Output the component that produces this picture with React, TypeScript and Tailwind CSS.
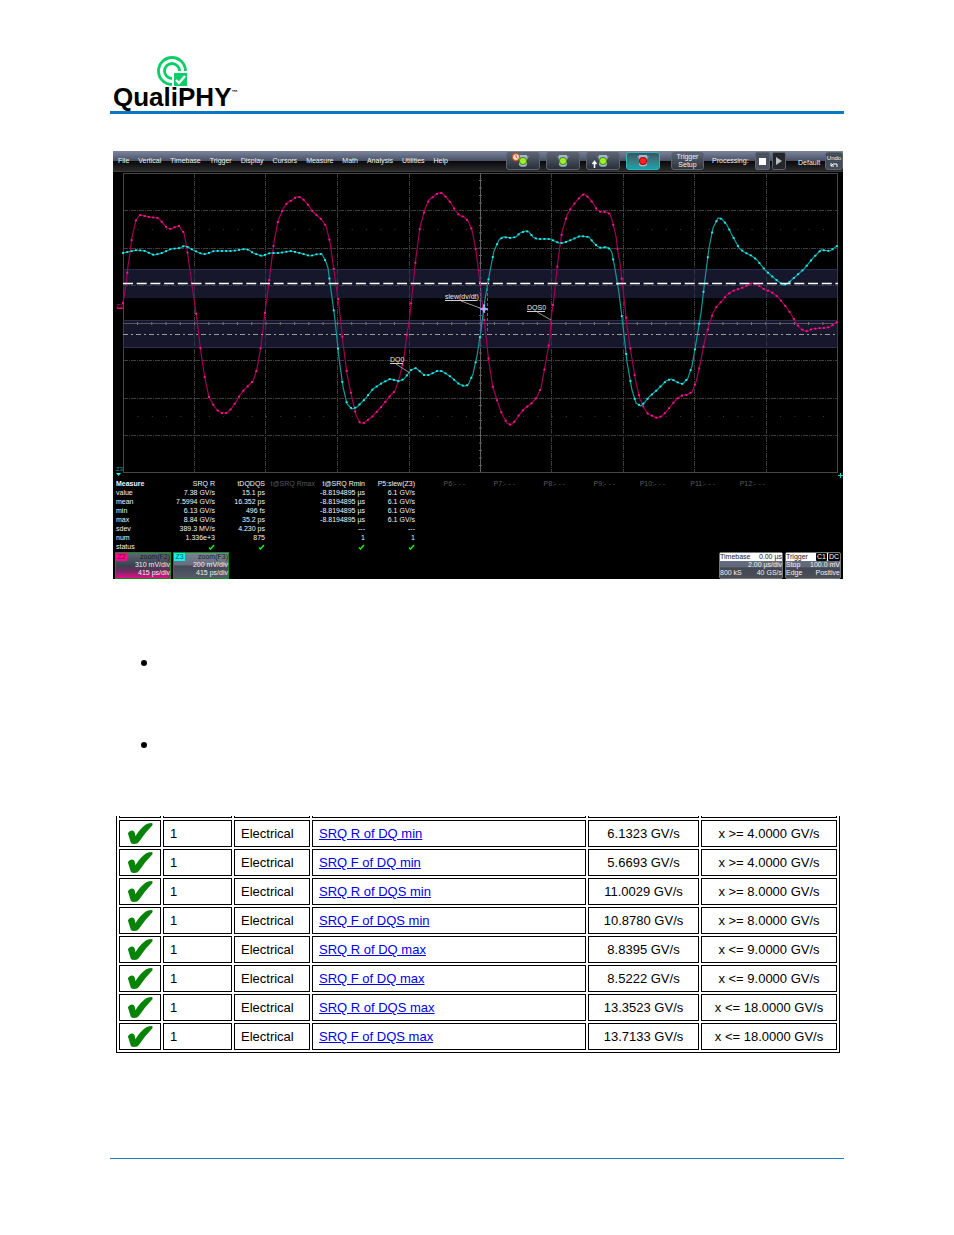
import React from 'react';

type Point = [number, number];

const menuItems = ['File', 'Vertical', 'Timebase', 'Trigger', 'Display', 'Cursors', 'Measure', 'Math', 'Analysis', 'Utilities', 'Help'];

const measureHeads = ['SRQ R', 'tDQDQS', 't@SRQ Rmax', 't@SRQ Rmin', 'P5:slew(Z3)', 'P6:- - -', 'P7:- - -', 'P8:- - -', 'P9:- - -', 'P10:- - -', 'P11:- - -', 'P12:- - -'];

const dimHeads = ['t@SRQ Rmax', 'P6:- - -', 'P7:- - -', 'P8:- - -', 'P9:- - -', 'P10:- - -', 'P11:- - -', 'P12:- - -'];

const measureRows = [
  { name: 'value', cells: ['7.38 GV/s', '15.1 ps', '', '-8.8194895 µs', '6.1 GV/s'] },
  { name: 'mean', cells: ['7.5994 GV/s', '16.352 ps', '', '-8.8194895 µs', '6.1 GV/s'] },
  { name: 'min', cells: ['6.13 GV/s', '496 fs', '', '-8.8194895 µs', '6.1 GV/s'] },
  { name: 'max', cells: ['8.84 GV/s', '35.2 ps', '', '-8.8194895 µs', '6.1 GV/s'] },
  { name: 'sdev', cells: ['389.3 MV/s', '4.230 ps', '', '---', '---'] },
  { name: 'num', cells: ['1.336e+3', '875', '', '1', '1'] },
  { name: 'status', cells: ['ok', 'ok', '', 'ok', 'ok'] },
];

const results = [
  { name: 'SRQ R of DQ min', value: '6.1323 GV/s', limit: 'x >= 4.0000 GV/s' },
  { name: 'SRQ F of DQ min', value: '5.6693 GV/s', limit: 'x >= 4.0000 GV/s' },
  { name: 'SRQ R of DQS min', value: '11.0029 GV/s', limit: 'x >= 8.0000 GV/s' },
  { name: 'SRQ F of DQS min', value: '10.8780 GV/s', limit: 'x >= 8.0000 GV/s' },
  { name: 'SRQ R of DQ max', value: '8.8395 GV/s', limit: 'x <= 9.0000 GV/s' },
  { name: 'SRQ F of DQ max', value: '8.5222 GV/s', limit: 'x <= 9.0000 GV/s' },
  { name: 'SRQ R of DQS max', value: '13.3523 GV/s', limit: 'x <= 18.0000 GV/s' },
  { name: 'SRQ F of DQS max', value: '13.7133 GV/s', limit: 'x <= 18.0000 GV/s' },
];

const dqs =
  '10,132 13,114 15,95 17,82 19,66 23,49 27,44 36,46 45,47 49,51 54,57 58,58 62,56 66,55 71,62 74,78 76,92 80,121 84,149 88,182 92,208 96,226 101,235 105,240 109,242 114,242 118,238 123,231 127,224 131,219 135,215 140,210 144,198 148,175 152,141 157,103 161,71 165,50 170,38 174,32 179,29 183,26 187,26 191,29 196,35 200,41 208,48 213,55 217,71 221,100 226,135 230,172 234,203 239,227 243,244 247,252 251,252 260,245 269,235 277,225 282,220 286,208 290,192 292,179 294,162 296,152 299,124 303,86 307,56 312,38 316,29 320,26 325,22 329,22 333,26 338,32 342,39 346,44 351,46 355,50 359,59 363,80 367,112 372,156 376,192 380,217 385,232 389,243 394,252 398,254 402,250 406,244 411,238 419,232 424,226 428,217 433,190 437,167 438,148 441,127 445,89 449,61 454,44 458,37 462,32 467,26 471,23 475,26 480,32 484,39 488,41 493,41 497,43 499,49 503,65 505,82 507,92 510,118 514,155 519,188 523,212 527,228 531,237 535,243 540,245 544,247 549,245 553,241 557,236 561,231 565,227 570,224 574,224 579,221 583,211 587,194 591,173 596,154 600,142 604,135 609,130 613,125 618,121 622,119 626,118 631,116 635,114 639,112 643,113 648,116 652,119 657,120 661,123 665,126 669,131 674,137 678,143 682,150 686,156 691,160 695,160 699,158 708,157 712,157 717,156 721,153 724,151';

const dq =
  '10,82 24,79 32,80 41,84 49,82 58,78 67,77 71,75 75,76 80,79 89,83 93,83 101,80 119,80 132,78 136,79 140,82 149,85 157,82 166,82 178,80 187,82 197,85 205,83 209,83 213,91 215,97 217,112 222,149 226,187 230,216 234,233 239,238 244,236 252,228 260,218 269,212 277,208 286,210 291,208 298,199 303,197 311,204 316,204 324,200 329,200 338,206 346,213 351,215 355,214 360,203 364,185 368,159 372,128 377,100 381,80 386,69 390,66 398,67 403,66 407,62 413,60 416,61 420,66 424,68 437,68 446,72 450,72 458,69 467,65 476,66 480,71 484,75 488,77 493,76 497,78 499,82 502,98 506,122 510,155 514,191 519,219 523,232 528,235 532,231 536,226 544,219 553,210 558,208 566,212 570,213 575,207 579,195 583,172 588,142 592,108 596,77 600,57 605,47 609,48 614,54 618,62 626,77 631,81 639,85 644,89 652,99 661,107 670,114 674,113 682,106 691,98 700,87 708,79 717,80 724,75';

const columns = [81.5, 152.5, 224.5, 296.5, 438.5, 510.5, 581.5, 653.5];
const rows = [39.5, 77.5, 114.5, 189.5, 227.5, 264.5];

function parse(trace: string): Point[] {
  return trace.split(' ').map((p) => p.split(',').map(Number) as Point);
}

// Sample points at a fixed time step along a trace
function sample(trace: string, step: number): Point[] {
  const pts = parse(trace);
  const out: Point[] = [];
  let i = 0;
  for (let x = pts[0][0]; x <= pts[pts.length - 1][0]; x += step) {
    while (i < pts.length - 2 && pts[i + 1][0] < x) i++;
    const [x0, y0] = pts[i];
    const [x1, y1] = pts[i + 1];
    out.push([x, y0 + ((y1 - y0) * (x - x0)) / (x1 - x0)]);
  }
  return out;
}

function Trace({ data, line, dot }: { data: string; line: string; dot: string }) {
  return (
    <g>
      <polyline points={data} fill="none" stroke={line} strokeWidth="1.2" />
      {sample(data, 4.3).map(([x, y], i) => (
        <rect key={i} x={x - 1} y={y - 0.9} width="2" height="1.8" fill={dot} />
      ))}
    </g>
  );
}

function Plot() {
  const ticksX = Array.from({ length: 49 }, (_, i) => 24.5 + i * 14.28);
  const ticksY = Array.from({ length: 39 }, (_, i) => 9.5 + i * 7.5);
  return (
    <svg viewBox="0 0 730 307" className="block w-full" fontFamily="Liberation Sans, sans-serif" fontSize="7">
      <rect width="730" height="1" fill="#3a3a3a" />
      <g stroke="#3c3c3c" strokeDasharray="5 1 1 1">
        {columns.map((x) => <line key={x} x1={x} x2={x} y1="2" y2="301" />)}
        {rows.map((y) => <line key={y} x1="10" x2="724" y1={y} y2={y} />)}
      </g>
      <rect x="10.5" y="2.5" width="714" height="299" fill="none" stroke="#474747" />
      <line x1="367.5" x2="367.5" y1="2" y2="301" stroke="#606060" />
      {ticksY.map((y) => <line key={y} x1="366" x2="369" y1={y} y2={y} stroke="#606060" />)}
      {ticksX.map((x) => (
        <g key={x} fill="#3c3c3c">
          <rect x={x} y="58" width="1" height="1" />
          <rect x={x} y="245" width="1" height="1" />
        </g>
      ))}

      <rect x="10" y="98" width="715" height="29" fill="#2d2d55" fillOpacity="0.5" />
      <rect x="10" y="149" width="715" height="28" fill="#2d2d55" fillOpacity="0.5" />
      <path d="M10 98.5H724M10 149.5H724M10 176.5H724" stroke="#2c2c50" />
      <line x1="10" x2="724" y1="152.5" y2="152.5" stroke="#55555c" />
      {ticksX.map((x) => <line key={x} x1={x} x2={x} y1="151" y2="154" stroke="#77776c" />)}

      <Trace data={dqs} line="#a30055" dot="#ff1493" />
      <Trace data={dq} line="#109a9a" dot="#19f5f5" />

      <line x1="10" x2="725" y1="112.5" y2="112.5" stroke="#fff" strokeWidth="1.3" strokeDasharray="10 3.7" />
      <line x1="10" x2="725" y1="163.5" y2="163.5" stroke="#9c9ca0" strokeDasharray="5 3 2 3" />

      {/* Slew cursor and trace labels */}
      <path d="M367.5 112V162M374.5 112V162" stroke="#5c5ca0" strokeDasharray="3 2" />
      <path d="M371 134l1 3 3 1-3 1-1 3-1-3-3-1 3-1z" fill="#b4b4ff" stroke="#a0a0ff" />
      <g fill="#e6e6e6">
        <text x="332" y="128">slew(dv/dt)</text>
        <text x="414" y="139">DQS0</text>
        <text x="277" y="191">DQ0</text>
      </g>
      <path d="M332 129.5H364M414 140.5H432M277 192.5H290" stroke="#d0d0d0" />
      <path d="M348 130L367 137M424 141L438 149M283 193L297 202" stroke="#bdbdbd" strokeWidth="0.8" />

      <text x="3" y="137" fontSize="6" fill="#d0106f">Z2</text>
      <path d="M4 137.5H10" stroke="#d0106f" />
      <text x="3" y="300" fontSize="6" fill="#11a0a0">Z3</text>
      <path d="M3 302H8L5.5 305z" fill="#19f5f5" />
      <path d="M725 304.5H730M727.5 302V307" stroke="#19d5d5" />
    </svg>
  );
}

function TriggerButton({ label, kind }: { label: string; kind: 'auto' | 'normal' | 'single' | 'stop' }) {
  const stop = kind === 'stop';
  return (
    <button
      aria-label={label}
      className={`flex h-[18px] w-[34px] items-center justify-center rounded-[3px] border ${
        stop ? 'border-[#2fb5bb] bg-gradient-to-b from-[#3b5560] to-[#0fa4aa]' : 'border-[#5d636e] bg-gradient-to-b from-[#5b6475] to-[#2a2f39]'
      }`}
    >
      <svg viewBox="0 0 24 16" className="h-4 w-6">
        <path d="M6 3h12l-2 4v5l-2 2h-4l-2-2V7z" fill="#8290a8" />
        <path d="M8 2h8v10l-2 1h-4l-2-1z" fill="#a9b8d0" />
        <circle cx="12" cy="8" r="4" fill={stop ? '#a00808' : '#4b8a1a'} />
        <circle cx="12" cy="8" r="3" fill={stop ? '#ff2020' : '#9cf02c'} />
        {kind === 'auto' && (
          <g>
            <circle cx="5" cy="4" r="3.5" fill="#f5e6c8" stroke="#d8522a" strokeWidth="1.3" />
            <path d="M5 2v2l1.5 1" stroke="#333" strokeWidth="0.7" fill="none" />
          </g>
        )}
        {kind === 'single' && <path d="M3.5 15V9M1.5 11L3.5 8.5 5.5 11" stroke="#fff" strokeWidth="1.5" fill="none" />}
      </svg>
    </button>
  );
}

function MenuBar() {
  return (
    <div className="flex h-5 items-center bg-[linear-gradient(to_bottom,#7b869f_0%,#4a5265_48%,#0a0a0c_52%,#2b2b2d_100%)] text-[7px] text-[#f2f2f2]">
      <nav className="flex gap-[9px] pl-[5px]">
        {menuItems.map((item) => (
          <button key={item}>{item}</button>
        ))}
      </nav>
      <div className="ml-auto flex gap-[6px]">
        <TriggerButton label="Auto" kind="auto" />
        <TriggerButton label="Normal" kind="normal" />
        <TriggerButton label="Single" kind="single" />
        <TriggerButton label="Stop" kind="stop" />
      </div>
      <button className="ml-[11px] h-[18px] w-[33px] rounded-[3px] border border-[#5d636e] bg-gradient-to-b from-[#5b6475] to-[#30343c] leading-[8px]">
        Trigger Setup
      </button>
      <span className="ml-2 w-[40px] whitespace-nowrap">Processing:</span>
      <div className="ml-[3px] flex gap-[2px]">
        <button aria-label="Pause" className="flex h-[18px] w-[15px] items-center justify-center rounded-[2px] border border-[#5d636e] bg-[#4a505c]">
          <span className="size-[7px] bg-white"></span>
        </button>
        <button aria-label="Run" className="flex h-[18px] w-[14px] items-center justify-center rounded-[2px] border border-[#5d636e] bg-[#24262b]">
          <svg viewBox="0 0 8 10" className="h-[10px] w-2">
            <path d="M1 1l6 4-6 4z" fill="#b8bcc4" />
          </svg>
        </button>
      </div>
      <span className="ml-[12px] w-[25px] pt-1">Default</span>
      <button className="ml-[2px] flex h-[18px] w-[18px] flex-col items-center justify-center rounded-[3px] border border-[#5d636e] bg-[#444b59] text-[6px] leading-[7px]">
        Undo
        <svg viewBox="0 0 10 6" className="h-[6px] w-[10px]">
          <path d="M2 1v3h3M2 4l2-2h4v3" fill="none" stroke="#fff" />
        </svg>
      </button>
    </div>
  );
}

function MeasureTable() {
  return (
    <table className="mt-px w-full table-fixed border-collapse text-right text-[7px] leading-[9px] text-[#f4f4f4]">
      <colgroup>
        <col className="w-[52px]" />
        {measureHeads.map((head) => (
          <col key={head} className="w-[50px]" />
        ))}
        <col />
      </colgroup>
      <thead>
        <tr className="h-[9px]">
          <th className="p-0 pl-[3px] text-left">Measure</th>
          {measureHeads.map((head) => (
            <th key={head} className={`whitespace-nowrap p-0 font-normal ${dimHeads.includes(head) ? 'text-[#5a5a5a]' : ''}`}>
              {head}
            </th>
          ))}
          <td></td>
        </tr>
      </thead>
      <tbody>
        {measureRows.map((row) => (
          <tr key={row.name} className="h-[9px]">
            <th className="p-0 pl-[3px] text-left font-normal">{row.name}</th>
            {row.cells.map((cell, i) => (
              <td key={i} className="whitespace-nowrap p-0">
                {cell === 'ok' ? (
                  <svg viewBox="0 0 7 6" className="ml-auto h-[6px] w-[7px]" role="img" aria-label="ok">
                    <path d="M1 3.5L2.5 5 6 1" fill="none" stroke="#14e614" strokeWidth="1.6" />
                  </svg>
                ) : (
                  cell
                )}
              </td>
            ))}
          </tr>
        ))}
      </tbody>
    </table>
  );
}

function Descriptors() {
  return (
    <div className="mt-px flex gap-[2px] pl-[2px] pr-[2px] text-[7px] leading-[8px] text-[#f0f0f0]">
      <div className="h-[27px] w-[56px] border border-[#158a1c] bg-[linear-gradient(to_top,#e0108a_0%,#6a2a5c_30%,#3a4350_50%,#5f6878_100%)] text-right">
        <div className="flex justify-between text-[#1c1c22]">
          <span className="w-[11px] bg-[#ff0a8c] text-center text-[#7a0040]">Z2</span>
          <span>zoom(F2)</span>
        </div>
        <div>310 mV/div</div>
        <div>415 ps/div</div>
      </div>
      <div className="h-[27px] w-[56px] border border-[#158a1c] bg-[linear-gradient(to_bottom,#7a8294_0%,#666e7e_48%,#434956_52%,#555b68_100%)] text-right">
        <div className="flex justify-between text-[#1c1c22]">
          <span className="w-[11px] bg-[#12f0f0] text-center text-[#045c5c]">Z3</span>
          <span>zoom(F3)</span>
        </div>
        <div>200 mV/div</div>
        <div>415 ps/div</div>
      </div>
      <div className="ml-auto h-[27px] w-[64px] rounded-[2px] border border-[#777] bg-[linear-gradient(to_bottom,#6d7588_0%,#5f6779_55%,#434853_60%,#4a4e58_100%)] text-right">
        <div className="flex justify-between bg-white text-[#222]">
          <span>Timebase</span>
          <span>0.00 µs</span>
        </div>
        <div>2.00 µs/div</div>
        <div className="flex justify-between">
          <span>800 kS</span>
          <span>40 GS/s</span>
        </div>
      </div>
      <div className="h-[27px] w-[56px] rounded-[2px] border border-[#777] bg-[linear-gradient(to_bottom,#6d7588_0%,#5f6779_55%,#434853_60%,#4a4e58_100%)]">
        <div className="flex justify-between bg-white text-[#222]">
          <span>Trigger</span>
          <span className="flex gap-px text-white">
            <span className="rounded-[1px] bg-black px-px">C1</span>
            <span className="rounded-[1px] bg-black px-px">DC</span>
          </span>
        </div>
        <div className="flex justify-between">
          <span>Stop</span>
          <span>100.0 mV</span>
        </div>
        <div className="flex justify-between">
          <span>Edge</span>
          <span>Positive</span>
        </div>
      </div>
    </div>
  );
}

function ResultsTable() {
  return (
    <div className="ml-[6px] mr-1 mt-[68px] overflow-hidden">
      <table className="-mt-[2px] w-full table-fixed border-separate border-spacing-[2px] border border-t-0 border-black text-[13px] leading-[15px] text-black">
        <colgroup>
          <col className="w-[42px]" />
          <col className="w-[69px]" />
          <col className="w-[76px]" />
          <col />
          <col className="w-[111px]" />
          <col className="w-[136px]" />
        </colgroup>
        <tbody>
          {/* lower edge of the row cut off above */}
          <tr aria-hidden="true">
            {[0, 1, 2, 3, 4, 5].map((i) => (
              <td key={i} className="h-[2px] border border-t-0 border-black p-0"></td>
            ))}
          </tr>
          {results.map((row) => (
            <tr key={row.name} className="h-[27px]">
              <td className="border border-black p-0">
                <svg viewBox="0 0 78 64" className="mx-auto block h-[21px] w-[26px]" role="img" aria-label="Pass">
                  <path d="M2 31Q8 22 15 23Q22 24 23 30L25 40Q40 16 58 4Q66 0 76 0Q78 3 77 7Q56 28 36 57Q32 64 22 64Q13 64 11 60Z" fill="#078307" />
                </svg>
              </td>
              <td className="border border-black px-[6px] py-0">1</td>
              <td className="border border-black px-[6px] py-0">Electrical</td>
              <td className="border border-black px-[6px] py-0">
                <a href="#" className="text-[#0000ee] underline">{row.name}</a>
              </td>
              <td className="border border-black p-0 text-center">{row.value}</td>
              <td className="border border-black p-0 text-center">{row.limit}</td>
            </tr>
          ))}
        </tbody>
      </table>
    </div>
  );
}

export default function App() {
  return (
    <div className="min-h-screen bg-white px-[110px] pb-[76px] pt-14 font-['Liberation_Sans',Arial,sans-serif]">
      <header className="border-b-[3px] border-[#0878c4] pb-1 pl-[3px]">
        <svg viewBox="0 0 31 31" className="ml-[44px] block size-[31px]">
          <circle cx="15" cy="15" r="13.5" fill="none" stroke="#0bcf66" strokeWidth="2.8" />
          <circle cx="15" cy="15" r="7.5" fill="none" stroke="#0bcf66" strokeWidth="2.8" />
          <path d="M15 15H31V31H15z" fill="#fff" />
          <path d="M17 17H30V30H17z" fill="#0bcf66" />
          <path d="M19 24l3 3 6-7" fill="none" stroke="#fff" strokeWidth="2.4" />
        </svg>
        <h1 className="flex text-[26px] font-bold leading-5 text-black">
          QualiPHY
          <span className="text-[6px] leading-[10px]">™</span>
        </h1>
      </header>

      <section className="ml-[3px] mr-px mt-[37px] bg-black">
        <MenuBar />
        <Plot />
        <MeasureTable />
        <Descriptors />
      </section>

      <ul className="mt-[81px] flex flex-col gap-[76px] pl-[31px]">
        <li className="size-[6px] rounded-full bg-black"></li>
        <li className="size-[6px] rounded-full bg-black"></li>
      </ul>

      <ResultsTable />

      <footer className="mt-[105px] border-t border-[#1b7fc4]"></footer>
    </div>
  );
}
